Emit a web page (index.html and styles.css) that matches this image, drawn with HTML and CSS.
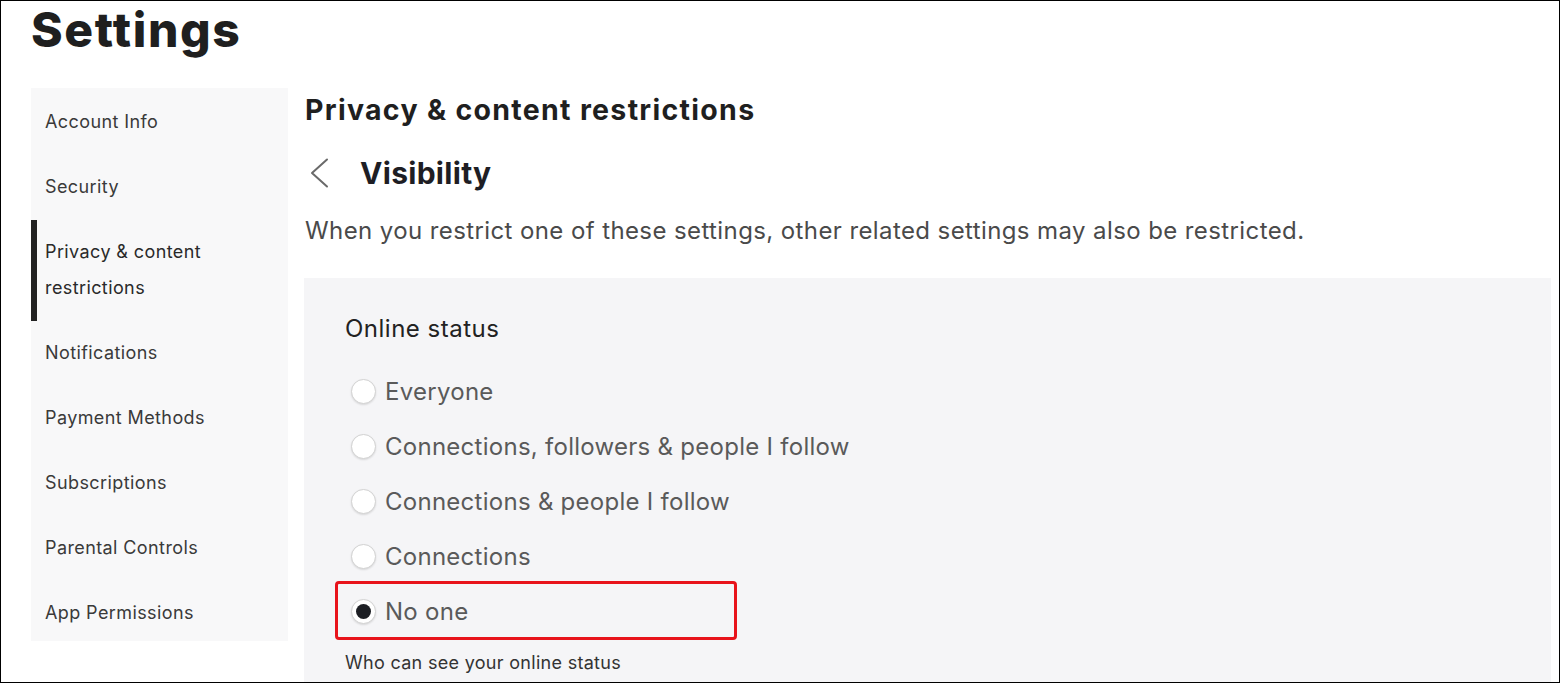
FILE: index.html
```html
<!DOCTYPE html>
<html lang="en">
<head>
<meta charset="utf-8">
<title>Settings</title>
<link rel="stylesheet" href="styles.css">
</head>
<body>
<div class="frame">
  <h1 class="page-title">Settings</h1>
  <div class="layout">
    <nav class="sidebar">
      <a class="nav-item">Account Info</a>
      <a class="nav-item">Security</a>
      <a class="nav-item active">Privacy &amp; content<br>restrictions</a>
      <a class="nav-item">Notifications</a>
      <a class="nav-item">Payment Methods</a>
      <a class="nav-item">Subscriptions</a>
      <a class="nav-item">Parental Controls</a>
      <a class="nav-item last">App Permissions</a>
    </nav>
    <main class="content">
      <h2 class="section-title">Privacy &amp; content restrictions</h2>
      <div class="sub-header">
        <svg class="back-icon" width="24" height="30" viewBox="0 0 24 30" aria-hidden="true">
          <path d="M19 1.5 L4 15 L19 28.5" fill="none" stroke="#6a6a6a" stroke-width="2" stroke-linecap="round" stroke-linejoin="round"/>
        </svg>
        <h3 class="sub-title">Visibility</h3>
      </div>
      <p class="desc">When you restrict one of these settings, other related settings may also be restricted.</p>
      <section class="card">
        <h4 class="card-title">Online status</h4>
        <ul class="options">
          <li class="option"><span class="radio"></span><span class="label">Everyone</span></li>
          <li class="option"><span class="radio"></span><span class="label">Connections, followers &amp; people I follow</span></li>
          <li class="option"><span class="radio"></span><span class="label">Connections &amp; people I follow</span></li>
          <li class="option"><span class="radio"></span><span class="label">Connections</span></li>
          <li class="option selected highlighted"><span class="radio checked"></span><span class="label">No one</span></li>
        </ul>
        <p class="hint">Who can see your online status</p>
      </section>
    </main>
  </div>
</div>
</body>
</html>
```
FILE: styles.css
```css
*, *::before, *::after { box-sizing: border-box; }
html, body { margin: 0; padding: 0; background: #fff; }
body {
  font-family: Inter, "Open Sans", "Liberation Sans", sans-serif;
  color: #222;
}
.frame {
  width: 1560px;
  height: 683px;
  border: 1px solid #000;
  overflow: hidden;
  padding: 0 8px 0 30px;
}
.page-title {
  margin: 0;
  font-size: 48px;
  line-height: 58px;
  font-weight: 800;
  letter-spacing: 1.6px;
  color: #1f1f1f;
}
.layout {
  display: flex;
  margin-top: 29px;
  gap: 16px;
}
.sidebar {
  width: 257px;
  flex: none;
  background: #f8f8f9;
  padding-top: 2px;
  align-self: flex-start;
  display: flex;
  flex-direction: column;
}
.nav-item {
  display: block;
  padding: 14px 14px 15px 14px;
  font-size: 18px;
  line-height: 36px;
  letter-spacing: 0.4px;
  color: #3a3a3a;
}
.nav-item.last {
  padding-bottom: 10px;
}
.nav-item.active {
  border-left: 6px solid #222;
  padding-left: 8px;
  color: #2a2a2a;
}
.content {
  flex: 1;
  min-width: 0;
}
.section-title {
  margin: 2px 0 0 1px;
  font-size: 28.5px;
  line-height: 40px;
  font-weight: 700;
  letter-spacing: 1.3px;
  color: #1f1f1f;
}
.sub-header {
  display: flex;
  align-items: center;
  height: 44px;
  margin-top: 21px;
  padding-left: 4px;
  gap: 28px;
}
.back-icon { display: block; }
.sub-title {
  margin: 0;
  font-size: 30px;
  line-height: 44px;
  font-weight: 700;
  letter-spacing: 0.3px;
  color: #1e1e24;
}
.desc {
  margin: 20px 0 0 1px;
  font-size: 24px;
  line-height: 32px;
  letter-spacing: 0.4px;
  color: #4a4a4a;
}
.card {
  margin-top: 31px;
  background: #f5f5f7;
  padding: 35px 0 40px 41px;
  min-height: 420px;
}
.card-title {
  margin: 0;
  font-size: 24px;
  line-height: 32px;
  font-weight: 400;
  letter-spacing: 0.5px;
  color: #222;
}
.options {
  list-style: none;
  margin: 19px 0 0 0;
  padding: 0;
}
.option {
  position: relative;
  display: flex;
  align-items: center;
  height: 55px;
  padding-left: 6px;
  gap: 9px;
}
.radio {
  width: 25px;
  height: 25px;
  flex: none;
  border-radius: 50%;
  background: #fff;
  border: 1px solid #d2d2d2;
  box-shadow: 0 1px 2px rgba(0,0,0,0.12);
  display: flex;
  align-items: center;
  justify-content: center;
}
.radio.checked::before {
  content: "";
  width: 15px;
  height: 15px;
  border-radius: 50%;
  background: #1d1f24;
}
.label {
  font-size: 24px;
  line-height: 32px;
  letter-spacing: 0.27px;
  color: #5a5a5a;
}
.highlighted::after {
  content: "";
  position: absolute;
  left: -10px;
  top: -3px;
  width: 402px;
  height: 59px;
  border: 3px solid #e8131b;
  border-radius: 4px;
  pointer-events: none;
}
.hint {
  margin: 12px 0 0 0;
  font-size: 18px;
  line-height: 24px;
  letter-spacing: 0.3px;
  color: #333;
}
```
